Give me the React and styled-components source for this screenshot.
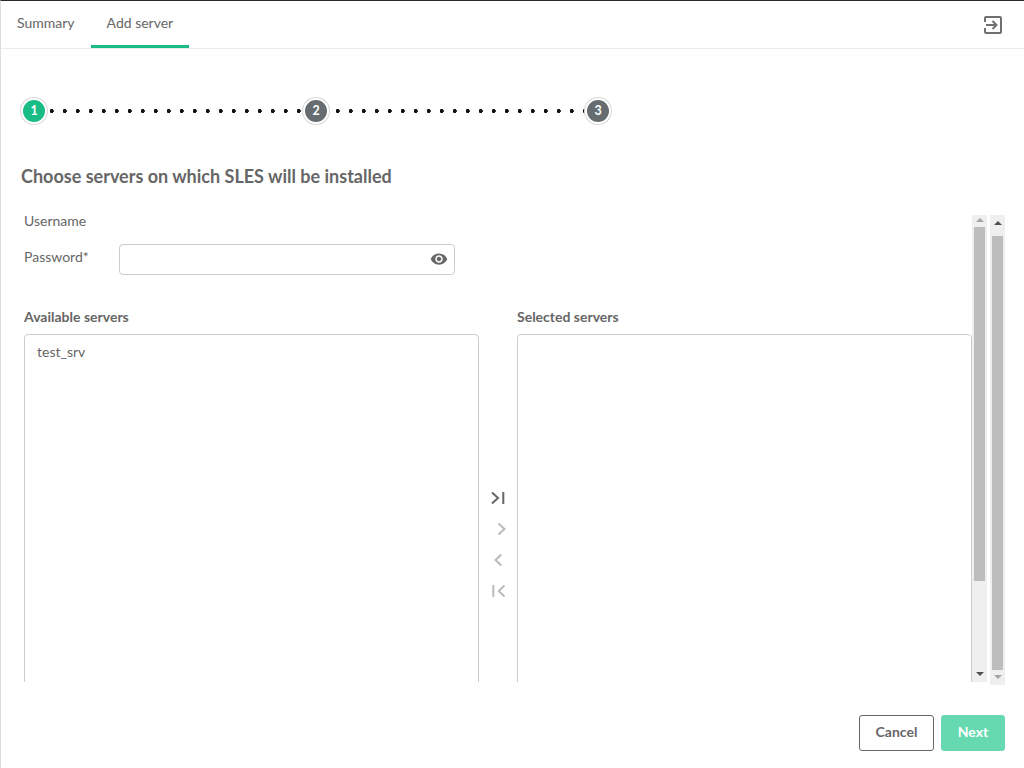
import React from 'react';
import styled, { createGlobalStyle } from 'styled-components';

const Global = createGlobalStyle`
    html, body, #root {
        margin: 0;
        padding: 0;
        height: 100%;
    }
    body {
        background: #fff;
        font-family: Lato, "Open Sans", sans-serif;
        color: #666;
        overflow: hidden;
    }
`;

const Page = styled.div`
    width: 1024px;
    height: 768px;
    box-sizing: border-box;
    border-top: 1px solid #22282e;
    border-left: 1px solid #ddd;
    display: flex;
    flex-direction: column;
`;

const TabBar = styled.div`
    height: 48px;
    flex: none;
    box-sizing: border-box;
    border-bottom: 1px solid #ebebeb;
    display: flex;
    align-items: stretch;
    padding-right: 22px;
`;

const Tab = styled.div`
    padding: 13px 16px 0;
    font-size: 14px;
    line-height: 17px;
    height: 47px;
    box-sizing: border-box;
    color: #666;
    border-bottom: 3px solid ${(props) => (props.$active ? '#1abc85' : 'transparent')};
`;

const TabIcon = styled.svg`
    margin: 15px 0 0 auto;
    width: 18px;
    height: 18px;
`;

const Content = styled.div`
    flex: 1;
    min-height: 0;
    display: flex;
    flex-direction: column;
`;

const Stepper = styled.div`
    display: flex;
    align-items: center;
    padding: 49px 0 0 20px;
`;

const Step = styled.div`
    width: 22px;
    height: 22px;
    flex: none;
    border-radius: 50%;
    border: 2px solid #fff;
    box-shadow: 0 0 0 1px #d8d8d8;
    background: ${(props) => (props.$active ? '#1abc85' : '#666c70')};
    color: #fff;
    font-size: 12.5px;
    font-weight: 700;
    line-height: 22px;
    text-align: center;
`;

const Dots = styled.div`
    width: 256px;
    height: 4px;
    background: radial-gradient(circle at 2.7px 2px, #111 1.8px, transparent 2.2px) ${(props) => props.$phase}px 0 / 13px 4px repeat-x;
`;

const Heading = styled.h2`
    margin: 40px 0 0 20px;
    font-size: 18px;
    line-height: 24px;
    font-weight: 700;
    color: #666;
`;

const Body = styled.div`
    display: flex;
    margin-top: 27px;
    height: 470px;
    flex: none;
`;

const Form = styled.div`
    width: 971px;
    height: 470px;
    margin-top: -3px;
    overflow: hidden;
    padding-left: 23px;
    box-sizing: border-box;
    flex: none;
`;

const FieldRow = styled.div`
    display: flex;
    align-items: flex-start;
    height: ${(props) => props.$height}px;
`;

const FieldLabel = styled.div`
    width: 95px;
    flex: none;
    font-size: 14px;
    line-height: 17px;
    color: #666;
`;

const InputBox = styled.div`
    width: 336px;
    height: 31px;
    margin-top: -4px;
    box-sizing: border-box;
    border: 1px solid #ccc;
    border-radius: 4px;
    display: flex;
    align-items: center;
    justify-content: flex-end;
    padding: 0 6px 1px 0;
`;

const EyeIcon = styled.svg`
    width: 18px;
    height: 18px;
    fill: #666;
`;

const Transfer = styled.div`
    display: flex;
    margin-top: 9px;
`;

const ListColumn = styled.div`
    width: 455px;
    flex: none;
`;

const ListTitle = styled.div`
    font-size: 14px;
    font-weight: 700;
    line-height: 17px;
    margin-bottom: 9px;
    color: #666;
`;

const ListBox = styled.div`
    height: 500px;
    box-sizing: border-box;
    border: 1px solid #ccc;
    border-radius: 4px;
    padding: 8px 12px;
    font-size: 14px;
    line-height: 17px;
    color: #666;
`;

const Arrows = styled.div`
    width: 38px;
    flex: none;
    display: flex;
    flex-direction: column;
    align-items: center;
    padding-top: 180px;
`;

const ArrowButton = styled.svg`
    width: 20px;
    height: 20px;
    margin-bottom: 11px;
    fill: none;
    stroke: ${(props) => (props.$disabled ? '#bbb' : '#666')};
    stroke-width: 2;
`;

const Track = styled.div`
    width: 15px;
    height: ${(props) => props.$height}px;
    flex: none;
    margin-left: ${(props) => props.$gap}px;
    background: #efefef;
    display: flex;
    flex-direction: column;
    align-items: center;
`;

const TrackArrow = styled.div`
    width: 0;
    height: 0;
    flex: none;
    margin: ${(props) => (props.$up ? `${props.$offset}px 0 0` : `auto 0 ${props.$offset}px`)};
    border-left: 4px solid transparent;
    border-right: 4px solid transparent;
    ${(props) => (props.$up ? 'border-bottom' : 'border-top')}: 4px solid ${(props) => (props.$dim ? '#a3a3a3' : '#505050')};
`;

const Thumb = styled.div`
    width: 11px;
    height: ${(props) => props.$height}px;
    margin-top: ${(props) => props.$top}px;
    flex: none;
    background: #bdbdbd;
`;

const Footer = styled.div`
    display: flex;
    justify-content: flex-end;
    gap: 7px;
    padding: 30px 19px 0 0;
`;

const Button = styled.div`
    width: ${(props) => props.$width}px;
    height: 36px;
    box-sizing: border-box;
    border-radius: 3px;
    border: 1px solid ${(props) => (props.$primary ? '#66d9b0' : '#666')};
    background: ${(props) => (props.$primary ? '#66d9b0' : '#fff')};
    color: ${(props) => (props.$primary ? '#fff' : '#666')};
    font-size: 14px;
    font-weight: 700;
    line-height: 32px;
    text-align: center;
`;

export default function App() {
    return (
        <Page>
            <Global />
            <TabBar>
                <Tab>Summary</Tab>
                <Tab $active>Add server</Tab>
                <TabIcon viewBox="0 0 18 18" fill="none" stroke="#707070" strokeWidth="2">
                    <path d="M1 6V2a1 1 0 0 1 1-1h14a1 1 0 0 1 1 1v14a1 1 0 0 1-1 1H2a1 1 0 0 1-1-1v-4" />
                    <path d="M2 9h10.500M8.500 5l4 4-4 4" />
                </TabIcon>
            </TabBar>
            <Content>
                <Stepper>
                    <Step $active>1</Step>
                    <Dots $phase={2} />
                    <Step>2</Step>
                    <Dots $phase={6} />
                    <Step>3</Step>
                </Stepper>
                <Heading>Choose servers on which SLES will be installed</Heading>
                <Body>
                    <Form>
                        <FieldRow $height={36}>
                            <FieldLabel>Username</FieldLabel>
                        </FieldRow>
                        <FieldRow $height={51}>
                            <FieldLabel>Password*</FieldLabel>
                            <InputBox>
                                <EyeIcon viewBox="0 0 24 24">
                                    <path d="M12 4.5C7 4.5 2.73 7.61 1 12c1.73 4.39 6 7.5 11 7.5s9.27-3.11 11-7.5c-1.73-4.39-6-7.5-11-7.5zM12 17c-2.76 0-5-2.24-5-5s2.24-5 5-5 5 2.24 5 5-2.24 5-5 5zm0-8c-1.66 0-3 1.34-3 3s1.34 3 3 3 3-1.34 3-3-1.34-3-3-3z" />
                                </EyeIcon>
                            </InputBox>
                        </FieldRow>
                        <Transfer>
                            <ListColumn>
                                <ListTitle>Available servers</ListTitle>
                                <ListBox>test_srv</ListBox>
                            </ListColumn>
                            <Arrows>
                                <ArrowButton viewBox="0 0 20 20">
                                    <path d="M4 4.500l6 5.500-6 5.500M15.300 4v12" />
                                </ArrowButton>
                                <ArrowButton viewBox="0 0 20 20" $disabled>
                                    <path d="M10.500 4.500l6 5.500-6 5.500" />
                                </ArrowButton>
                                <ArrowButton viewBox="0 0 20 20" $disabled>
                                    <path d="M13.300 4.500L7.500 10l5.800 5.500" />
                                </ArrowButton>
                                <ArrowButton viewBox="0 0 20 20" $disabled>
                                    <path d="M5.300 4v12M16.500 4.500L10.800 10l5.700 5.500" />
                                </ArrowButton>
                            </Arrows>
                            <ListColumn>
                                <ListTitle>Selected servers</ListTitle>
                                <ListBox />
                            </ListColumn>
                        </Transfer>
                    </Form>
                    <Track $height={467} $gap={0}>
                        <TrackArrow $up $dim $offset={3} />
                        <Thumb $height={354} $top={5} />
                        <TrackArrow $offset={6} />
                    </Track>
                    <Track $height={470} $gap={3}>
                        <TrackArrow $up $offset={6} />
                        <Thumb $height={434} $top={11} />
                        <TrackArrow $dim $offset={6} />
                    </Track>
                </Body>
                <Footer>
                    <Button $width={75}>Cancel</Button>
                    <Button $width={64} $primary>Next</Button>
                </Footer>
            </Content>
        </Page>
    );
}
